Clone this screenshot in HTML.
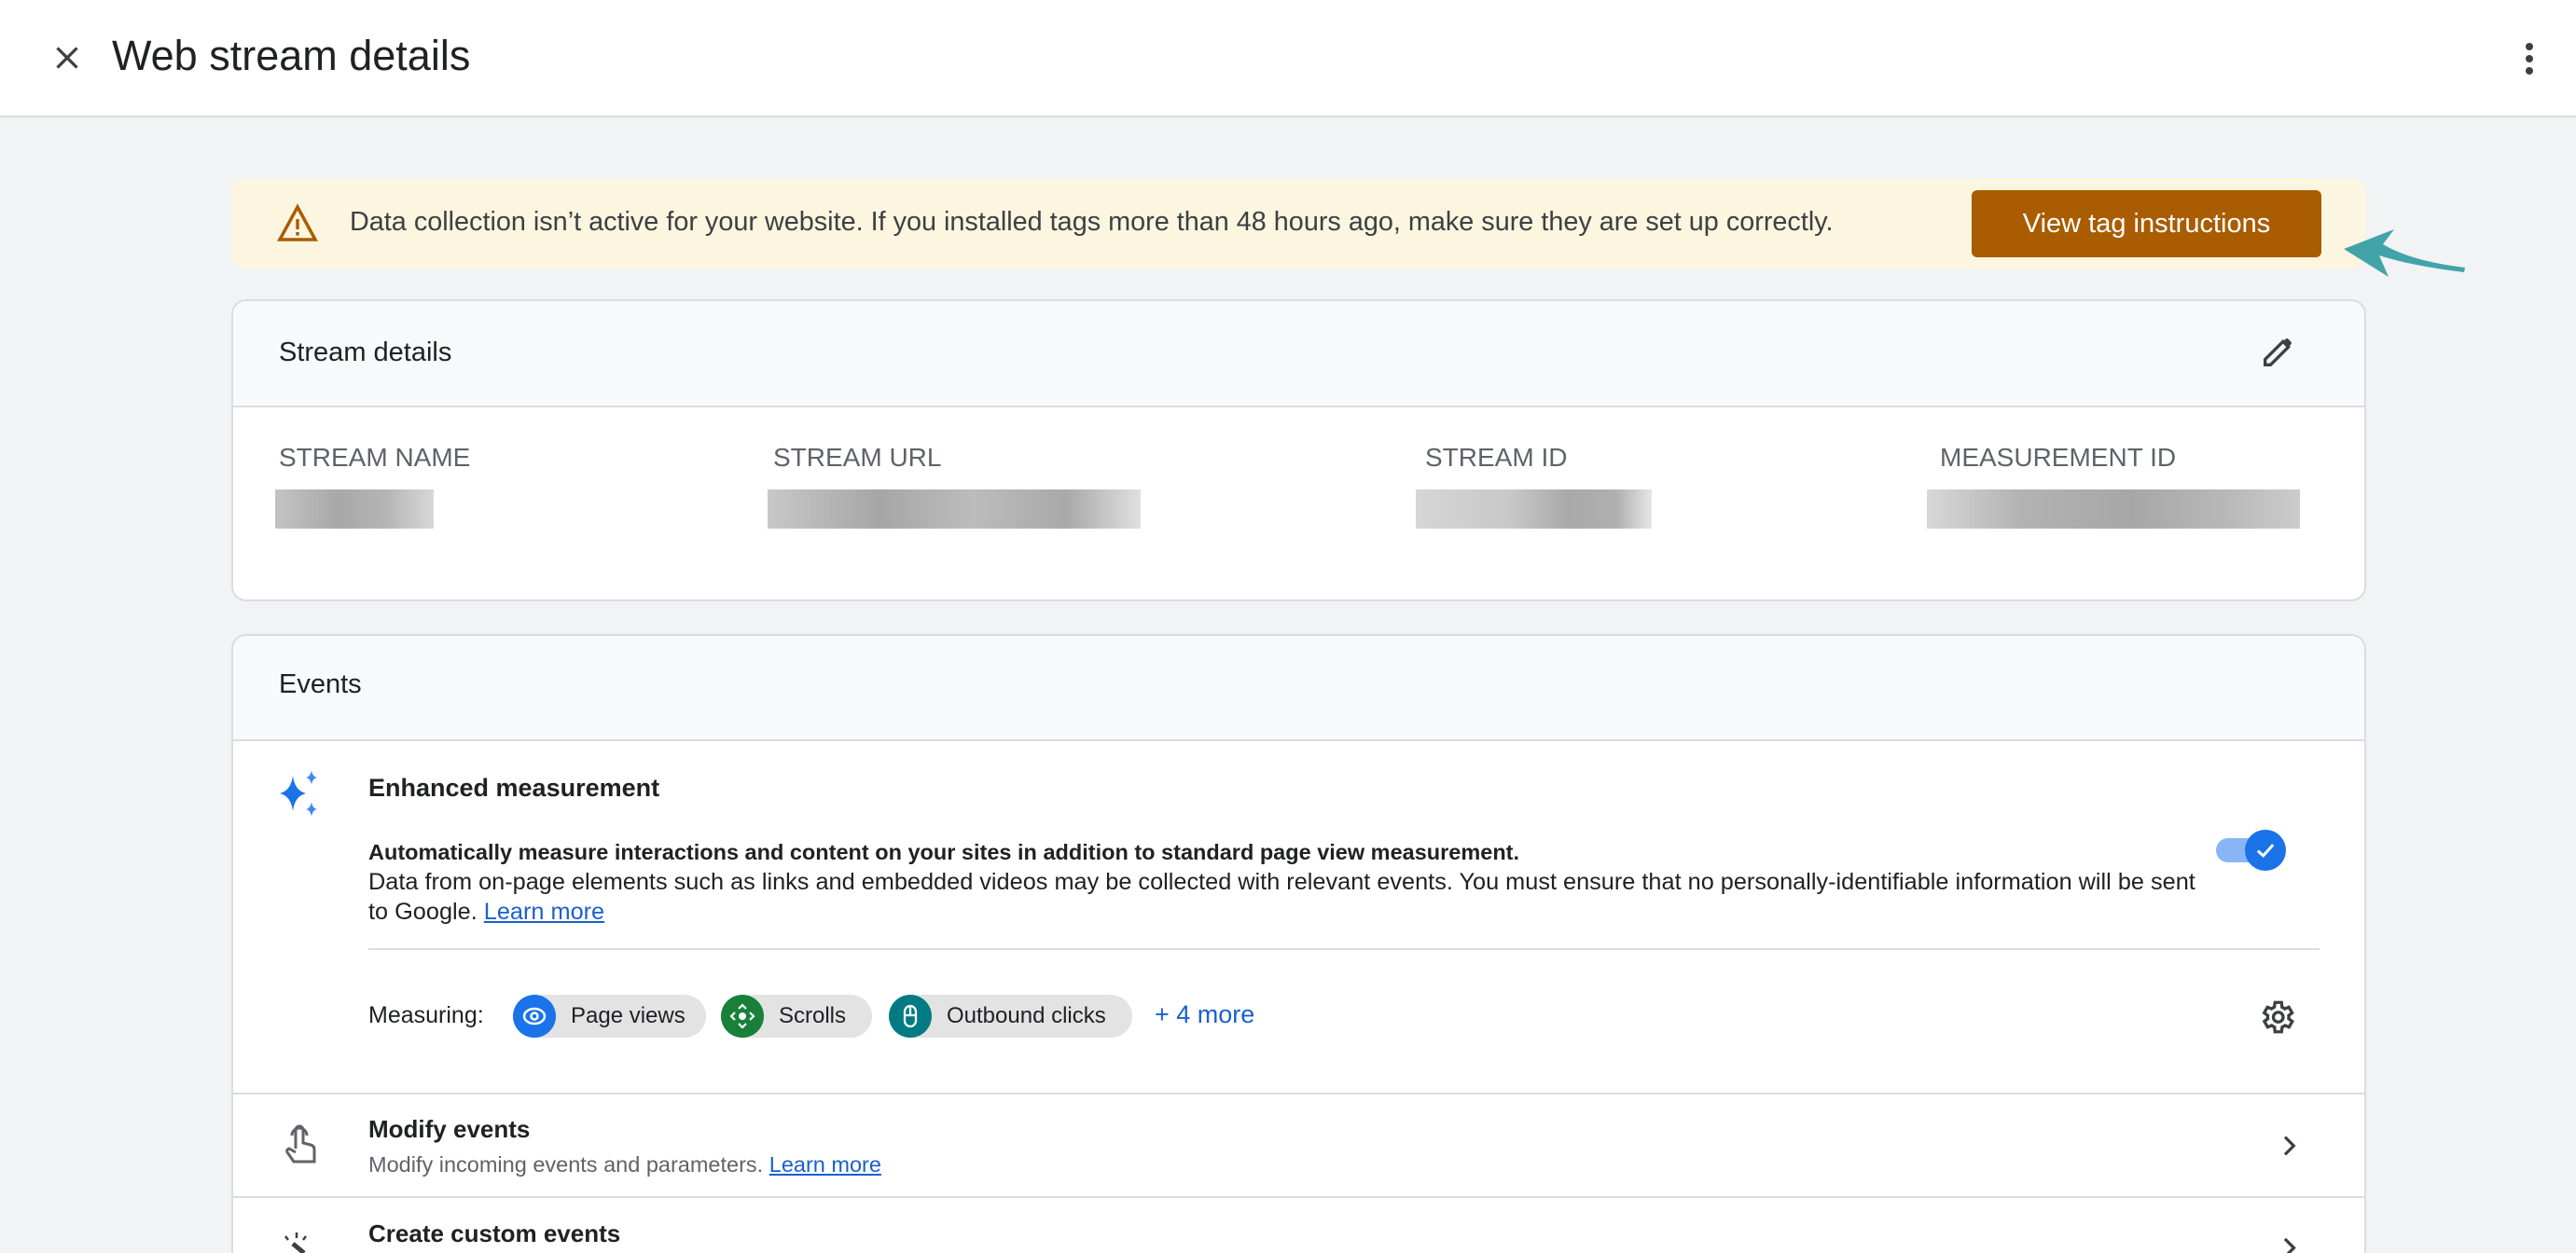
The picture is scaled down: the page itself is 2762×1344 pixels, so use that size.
<!DOCTYPE html>
<html><head><meta charset="utf-8"><style>
*{box-sizing:border-box;margin:0;padding:0}
html,body{width:2762px;height:1344px;overflow:hidden}
body{background:#f1f3f4;font-family:"Liberation Sans",Arial,sans-serif;color:#202124;position:relative}
.abs{position:absolute}
.hdr{left:0;top:0;width:2762px;height:126px;background:#fff;border-bottom:2px solid #dadce0}
.title{left:120px;top:34px;font-size:45px;color:#202124;white-space:nowrap}
.banner{left:248px;top:192px;width:2289px;height:96px;background:#fcf5df;border-radius:14px}
.btxt{left:375px;top:222px;font-size:28.8px;color:#3c4043;white-space:nowrap}
.btn{left:2114px;top:204px;width:375px;height:72px;background:#a95c00;border-radius:6px;color:#fff;font-size:29px;text-align:center;line-height:72px}
.card{left:248px;width:2289px;background:#fff;border:2px solid #dadce0;border-radius:16px;overflow:hidden}
.ch{background:#f8f9fa;border-bottom:2px solid #dadce0}
.lab{font-size:28px;color:#5f6368;white-space:nowrap}
.px{position:absolute;background:#bdbdbd}
.chip{position:absolute;top:1067px;height:46px;background:#e3e3e3;border-radius:23px;font-size:24px;line-height:46px;white-space:nowrap}
.chip .c{position:absolute;left:0;top:0;width:46px;height:46px;border-radius:23px}
.chip span{position:absolute;left:62px}
a{color:#1a5fd0;text-decoration:underline}
</style></head><body>
<div class="abs hdr"></div>
<svg class="abs" style="left:54px;top:44px" width="36" height="36" viewBox="0 0 24 24"><path d="M5 5L19 19M19 5L5 19" stroke="#3c4043" stroke-width="2.2"/></svg>
<div class="abs title">Web stream details</div>
<svg class="abs" style="left:2700px;top:42px" width="24" height="42" viewBox="0 0 24 42"><circle cx="12" cy="8" r="4" fill="#3c4043"/><circle cx="12" cy="21" r="4" fill="#3c4043"/><circle cx="12" cy="34" r="4" fill="#3c4043"/></svg>

<div class="abs banner"></div>
<svg class="abs" style="left:297px;top:218px" width="44" height="42" viewBox="0 0 44 42"><path d="M22 4L41 39H3Z" fill="none" stroke="#a95c00" stroke-width="3.5"/><rect x="20.3" y="17" width="3.4" height="11" fill="#a95c00"/><rect x="20.3" y="31" width="3.4" height="3.6" fill="#a95c00"/></svg>
<div class="abs btxt">Data collection isn’t active for your website. If you installed tags more than 48 hours ago, make sure they are set up correctly.</div>
<div class="abs btn">View tag instructions</div>
<svg class="abs" style="left:2505px;top:240px" width="150" height="70" viewBox="0 0 150 70"><path d="M8 27L62 6L50 22Q80 40 138 47L137 52Q80 45 46 34L56 57Z" fill="#41a4a8"/></svg>

<div class="abs card" style="top:321px;height:324px">
 <div class="ch" style="height:114px"></div>
</div>
<div class="abs" style="left:299px;top:362px;font-size:29px;color:#202124">Stream details</div>
<svg class="abs" style="left:2422px;top:358px" width="40" height="40" viewBox="0 0 24 24"><path d="M4 20V16.5L15.5 5L19 8.5L7.5 20Z" fill="none" stroke="#3c4043" stroke-width="2"/><path d="M15.5 5L17 3.5Q18 2.5 19 3.5L20.5 5Q21.5 6 20.5 7L19 8.5Z" fill="#3c4043"/></svg>
<div class="abs lab" style="left:299px;top:475px">STREAM NAME</div>
<div class="abs lab" style="left:829px;top:475px">STREAM URL</div>
<div class="abs lab" style="left:1528px;top:475px">STREAM ID</div>
<div class="abs lab" style="left:2080px;top:475px">MEASUREMENT ID</div>
<div class="px" style="left:295px;top:525px;width:170px;height:42px;background:linear-gradient(90deg,#c4c4c4,#a8a8a8 40%,#b5b5b5 70%,#d8d8d8)"></div>
<div class="px" style="left:823px;top:525px;width:400px;height:42px;background:linear-gradient(90deg,#c8c8c8,#a6a6a6 30%,#bcbcbc 55%,#a9a9a9 80%,#e0e0e0)"></div>
<div class="px" style="left:1518px;top:525px;width:253px;height:42px;background:linear-gradient(90deg,#d6d6d6,#c8c8c8 40%,#a9a9a9 65%,#b0b0b0 85%,#e6e6e6)"></div>
<div class="px" style="left:2066px;top:525px;width:400px;height:42px;background:linear-gradient(90deg,#d8d8d8,#b3b3b3 25%,#a7a7a7 55%,#b8b8b8 80%,#cccccc)"></div>

<div class="abs card" style="top:680px;height:664px;border-bottom:none;border-radius:16px 16px 0 0">
 <div class="ch" style="height:113px"></div>
</div>
<div class="abs" style="left:299px;top:718px;font-size:29px">Events</div>
<svg class="abs" style="left:298px;top:826px" width="46" height="50" viewBox="0 0 46 50"><path d="M16 6Q18 22 30 25Q18 28 16 44Q14 28 2 25Q14 22 16 6Z" fill="#1a73e8"/><path d="M36 0Q37 7 42 8Q37 9 36 16Q35 9 30 8Q35 7 36 0Z" fill="#4285f4"/><path d="M36 34Q37 41 42 42Q37 43 36 50Q35 43 30 42Q35 41 36 34Z" fill="#4285f4"/></svg>
<div class="abs" style="left:395px;top:830px;font-size:27px;font-weight:bold;color:#202124">Enhanced measurement</div>
<div class="abs" style="left:395px;top:898px;font-size:25.3px;line-height:32px;color:#202124;width:1975px"><b style="font-size:23.5px">Automatically measure interactions and content on your sites in addition to standard page view measurement.</b><br>Data from on-page elements such as links and embedded videos may be collected with relevant events. You must ensure that no personally-identifiable information will be sent to Google. <a>Learn more</a></div>
<div class="abs" style="left:2376px;top:899px;width:56px;height:26px;border-radius:13px;background:#8ab4f8"></div>
<div class="abs" style="left:2407px;top:890px;width:44px;height:44px;border-radius:22px;background:#1a73e8"></div>
<svg class="abs" style="left:2415px;top:898px" width="28" height="28" viewBox="0 0 24 24"><path d="M5 12.5L10 17L19 7" fill="none" stroke="#fff" stroke-width="2.6"/></svg>
<div class="abs" style="left:395px;top:1017px;width:2092px;height:2px;background:#dadce0"></div>
<div class="abs" style="left:395px;top:1075px;font-size:25px;color:#202124">Measuring:</div>
<div class="chip" style="left:550px;width:207px"><div class="c" style="background:#1a73e8"></div><svg class="abs" style="left:8px;top:8px" width="30" height="30" viewBox="0 0 30 30"><ellipse cx="15" cy="15" rx="11" ry="8" fill="none" stroke="#fff" stroke-width="2.5"/><circle cx="15" cy="15" r="3.5" fill="none" stroke="#fff" stroke-width="2.5"/></svg><span>Page views</span></div>
<div class="chip" style="left:773px;width:162px"><div class="c" style="background:#188038"></div><svg class="abs" style="left:8px;top:8px" width="30" height="30" viewBox="0 0 30 30"><circle cx="15" cy="15" r="4" fill="#fff"/><path d="M11 7L15 3L19 7M11 23L15 27L19 23M7 11L3 15L7 19M23 11L27 15L23 19" fill="none" stroke="#fff" stroke-width="2.2"/></svg><span>Scrolls</span></div>
<div class="chip" style="left:953px;width:261px"><div class="c" style="background:#007b83"></div><svg class="abs" style="left:8px;top:8px" width="30" height="30" viewBox="0 0 30 30"><rect x="9" y="4" width="12" height="22" rx="6" fill="none" stroke="#fff" stroke-width="2.3"/><path d="M9 14H21M15 4V14" stroke="#fff" stroke-width="2.3"/></svg><span>Outbound clicks</span></div>
<div class="abs" style="left:1238px;top:1073px;font-size:27px;color:#1a5fd0">+ 4 more</div>
<svg class="abs" style="left:2420px;top:1070px" width="42" height="42" viewBox="0 0 24 24"><path d="M19.4 13a7.5 7.5 0 000-2l2.1-1.6-2-3.5-2.5 1a7 7 0 00-1.7-1L15 3h-4l-.4 2.9a7 7 0 00-1.7 1l-2.5-1-2 3.5L6.6 11a7.5 7.5 0 000 2l-2.1 1.6 2 3.5 2.5-1a7 7 0 001.7 1L11 21h4l.4-2.9a7 7 0 001.7-1l2.5 1 2-3.5Z" fill="none" stroke="#3c4043" stroke-width="1.9"/><circle cx="13" cy="12" r="3" fill="none" stroke="#3c4043" stroke-width="1.9"/></svg>
<div class="abs" style="left:250px;top:1172px;width:2285px;height:2px;background:#dadce0"></div>
<svg class="abs" style="left:303px;top:1206px" width="40" height="46" viewBox="0 0 40 46"><path d="M14 26V6a4 4 0 018 0v14l8 2q4 1 4 5v13H12L5 30q-1-3 2-4l7 4" fill="none" stroke="#5f6368" stroke-width="3"/><path d="M10 12a8 8 0 0116 0" fill="none" stroke="#5f6368" stroke-width="3"/></svg>
<div class="abs" style="left:395px;top:1196px;font-size:26px;font-weight:bold">Modify events</div>
<div class="abs" style="left:395px;top:1236px;font-size:23.5px;color:#5f6368">Modify incoming events and parameters. <a>Learn more</a></div>
<svg class="abs" style="left:2438px;top:1212px" width="32" height="34" viewBox="0 0 24 24"><path d="M9 5L16 12L9 19" fill="none" stroke="#3c4043" stroke-width="2.4"/></svg>
<div class="abs" style="left:250px;top:1283px;width:2285px;height:2px;background:#dadce0"></div>
<svg class="abs" style="left:300px;top:1320px" width="40" height="24" viewBox="0 0 40 24"><path d="M14 14L26 24" stroke="#3c4043" stroke-width="5"/><path d="M6 6L9 10M18 2V8M28 6L25 10" stroke="#3c4043" stroke-width="2.5"/></svg>
<div class="abs" style="left:395px;top:1308px;font-size:26px;font-weight:bold">Create custom events</div>
<svg class="abs" style="left:2438px;top:1322px" width="32" height="22" viewBox="0 0 24 16" preserveAspectRatio="xMidYMin slice"><path d="M9 5L16 12L9 19" fill="none" stroke="#3c4043" stroke-width="2.4"/></svg>
</body></html>
